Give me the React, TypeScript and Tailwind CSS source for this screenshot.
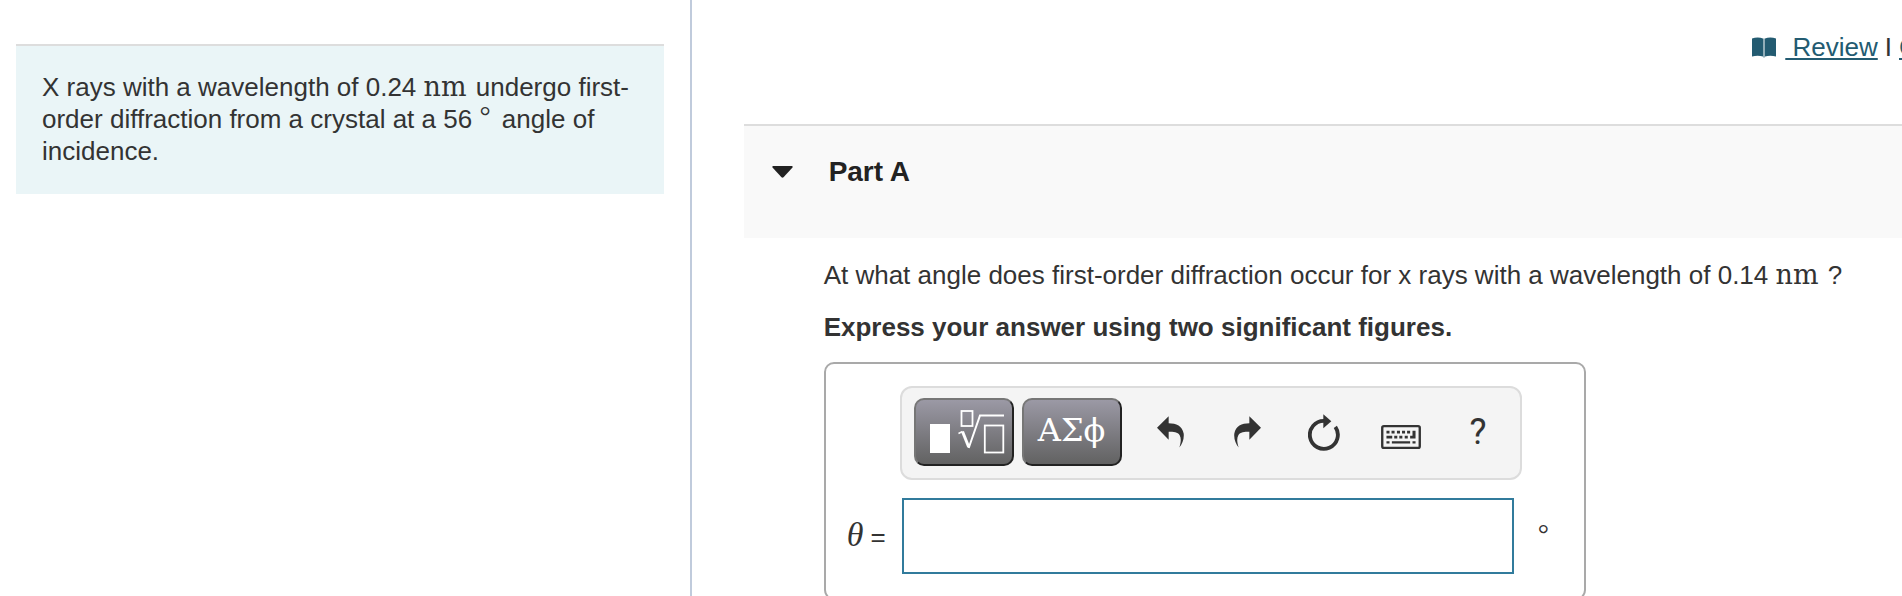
import React from "react";

function BookIcon() {
  return (
    <svg viewBox="0 0 24 21" className="h-[21px] w-6" fill="currentColor" aria-hidden="true">
      <path d="M0 1.500C3.500 0 8 0 11 1.500V19.500C8 18.500 3.500 18.500 0 19.500Z" />
      <path d="M13 1.500C16 0 20.500 0 24 1.500V19.500C20.500 18.500 16 18.500 13 19.500Z" />
      <path d="M11 1.500H13V20.500H11Z" opacity="0.5" />
    </svg>
  );
}

function CaretIcon() {
  return (
    <svg viewBox="0 0 21 12" className="h-3 w-[21px]" fill="currentColor" aria-hidden="true">
      <path d="M1 0H20Q21.300 .6 20.300 1.800L11.500 11.300Q10.500 12.200 9.500 11.300L.7 1.800Q-.3 .6 1 0Z" />
    </svg>
  );
}

function TemplateIcon() {
  return (
    <svg
      viewBox="9 11 82 47"
      className="h-[47px] w-[82px]"
      fill="none"
      stroke="currentColor"
      aria-hidden="true"
    >
      <rect x="16" y="26" width="20" height="29" fill="currentColor" stroke="none" />
      <rect x="47.500" y="13" width="11" height="15" strokeWidth="1.800" />
      <path d="M44.500 35.500L48.500 33.500" strokeWidth="1.500" />
      <path d="M48.500 33.500L54.700 49" strokeWidth="3" />
      <path d="M54.700 50L66 17.500H90" strokeWidth="2" />
      <rect x="70.800" y="27.500" width="18.500" height="27" strokeWidth="1.800" />
    </svg>
  );
}

const UNDO_PATH =
  "M0 35L35 0V21C58 21 76 29 80 52C82 68 76 84 67 94C72 80 73 66 68 57C62 48 50 47 35 47V71Z";

function UndoIcon() {
  return (
    <svg viewBox="0 0 81 95" className="h-8 w-[27px]" fill="currentColor" aria-hidden="true">
      <path d={UNDO_PATH} />
    </svg>
  );
}

function RedoIcon() {
  return (
    <svg viewBox="0 0 81 95" className="h-8 w-[27px]" fill="currentColor" aria-hidden="true">
      <path d={UNDO_PATH} transform="matrix(-1 0 0 1 81 0)" />
    </svg>
  );
}

function ResetIcon() {
  return (
    <svg viewBox="0 0 96 110" className="h-[37px] w-8" fill="none" aria-hidden="true">
      <path d="M48 20A42 42 0 1 0 82 38" stroke="currentColor" strokeWidth="11.500" />
      <path d="M46 0L70 21L46 42Z" fill="currentColor" />
    </svg>
  );
}

function KeyboardIcon() {
  return (
    <svg viewBox="0 0 118 71" className="mt-2.5 h-6 w-10" fill="currentColor" aria-hidden="true">
      <rect
        x="3.500"
        y="3.500"
        width="111"
        height="64"
        rx="5"
        fill="none"
        stroke="currentColor"
        strokeWidth="7"
      />
      <path d="M16 17h9v8h-9zM31 17h9v8h-9zM47 17h9v8h-9zM62 17h9v8h-9zM77 17h9v8h-9z" />
      <path d="M16 32h17v8H16zM39 32h9v8h-9zM54 32h9v8h-9zM70 32h9v8h-9z" />
      <path d="M93 17h9v23H86v-8h7z" />
      <path d="M16 48h9v7h-9zM32 48h54v7H32zM93 48h9v7h-9z" />
    </svg>
  );
}

function Unit({ children }: { children: React.ReactNode }) {
  return (
    <span className="mr-0.5 font-['DejaVu_Serif',serif] text-[27px] leading-4">{children}</span>
  );
}

function ToolButton({ label, children }: { label: string; children: React.ReactNode }) {
  return (
    <button aria-label={label} className="flex h-[68px] w-[77px] items-center justify-center">
      {children}
    </button>
  );
}

function PaletteButton({ label, children }: { label: string; children: React.ReactNode }) {
  return (
    <button
      aria-label={label}
      className="flex h-[68px] w-[100px] items-center justify-center rounded-[10px] border-2 border-t-[#767676] border-r-[#222] border-b-[#222] border-l-[#767676] bg-linear-to-b from-[#9b99a5] to-[#626262] text-white"
    >
      {children}
    </button>
  );
}

function Problem() {
  return (
    <aside className="border-r-2 border-[#c0cbdc] pt-11 pr-[26px] pl-4">
      <p className="border-t-2 border-[#ddd] bg-[#eaf5f7] px-[26px] pt-[25px] pb-[27px]">
        X rays with a wavelength of 0.24 <Unit>nm</Unit> undergo first-order diffraction from a
        crystal at a 56{" "}
        <span className="mr-1 align-[3px] font-['Liberation_Serif',serif] text-[28px] leading-4">
          °
        </span>{" "}
        angle of incidence.
      </p>
    </aside>
  );
}

function AnswerBox() {
  return (
    <div className="mt-[19px] h-[238px] w-[762px] rounded-[10px] border-2 border-[#a9a9a9] pt-[22px]">
      <div className="ml-[74px] flex h-[94px] w-[622px] items-start rounded-xl border-2 border-[#dcdcdc] bg-[#f4f4f4] pt-2.5 pl-3">
        <div className="flex gap-2">
          <PaletteButton label="Templates">
            <TemplateIcon />
          </PaletteButton>
          <PaletteButton label="Symbols">
            <span className="pb-1 font-['DejaVu_Serif',serif] text-[32px] leading-8">ΑΣϕ</span>
          </PaletteButton>
        </div>
        <div className="ml-2.5 flex">
          <ToolButton label="Undo">
            <UndoIcon />
          </ToolButton>
          <ToolButton label="Redo">
            <RedoIcon />
          </ToolButton>
          <ToolButton label="Reset">
            <ResetIcon />
          </ToolButton>
          <ToolButton label="Keyboard shortcuts">
            <KeyboardIcon />
          </ToolButton>
          <ToolButton label="Help">
            <span className="font-[Roboto,sans-serif] text-[36px] leading-10">?</span>
          </ToolButton>
        </div>
      </div>
      <div className="mt-[18px] flex h-[76px] items-center">
        <label htmlFor="theta" className="w-[76px] pl-[21px] whitespace-nowrap">
          <span className="font-['Liberation_Serif',serif] text-[34px] italic">θ</span> =
        </label>
        <input
          id="theta"
          type="text"
          className="h-full w-[612px] border-2 border-[#317b9c] bg-white px-3 outline-none"
        />
        <span className="ml-6 pb-1 font-['Liberation_Serif',serif] text-[28px]">°</span>
      </div>
    </div>
  );
}

function App() {
  return (
    <div className="grid h-screen grid-cols-[4fr_7fr] overflow-hidden bg-white font-['Liberation_Sans',Arial,sans-serif] text-[26px] leading-8 text-[#333]">
      <Problem />
      <main className="min-w-0 pt-[31px] pl-[52px]">
        <nav className="flex items-center justify-end text-[#235b71]">
          <BookIcon />
          <a href="#review" className="ml-[9px] whitespace-pre underline decoration-2 underline-offset-2">
            {" Review"}
          </a>
          <span className="mx-[7px] text-[#333]">I</span>
          <a
            href="#constants"
            className="w-[3px] overflow-hidden underline decoration-2 underline-offset-2"
          >
            Constants
          </a>
        </nav>
        <section className="mt-[61px]">
          <header className="flex items-center border-t-2 border-[#ddd] bg-[#f9f9f9] pt-[30px] pb-[50px] pl-7 text-[#222]">
            <button aria-label="Collapse Part A">
              <CaretIcon />
            </button>
            <h2 className="ml-9 text-[28px] font-bold">Part A</h2>
          </header>
          <div className="pt-[21px] pl-20">
            <p>
              At what angle does first-order diffraction occur for x rays with a wavelength of 0.14{" "}
              <Unit>nm</Unit> ?
            </p>
            <p className="mt-5 font-bold">Express your answer using two significant figures.</p>
            <AnswerBox />
          </div>
        </section>
      </main>
    </div>
  );
}

export default App;
